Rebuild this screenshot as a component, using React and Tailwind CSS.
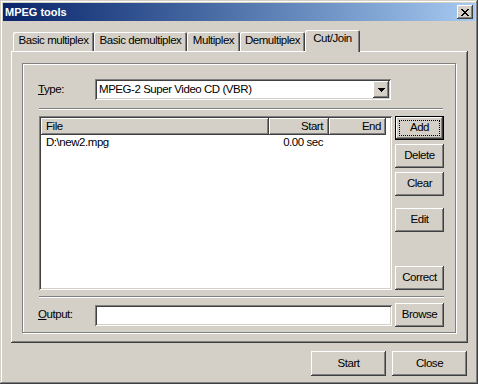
import React from "react";

const RAISED =
  "shadow-[inset_-1px_-1px_#404040,inset_1px_1px_#ffffff,inset_-2px_-2px_#808080,inset_2px_2px_#d4d0c8]";
const SUNKEN =
  "shadow-[inset_1px_1px_#808080,inset_-1px_-1px_#ffffff,inset_2px_2px_#404040,inset_-2px_-2px_#d4d0c8]";

function Btn({ children, className = "", def = false }) {
  if (def) {
    return (
      <div className={`border border-black bg-[#d4d0c8] flex ${className}`}>
        <div className={`flex-1 flex items-center justify-center p-[3px] ${RAISED}`}>
          <div className="w-full h-full border border-dotted border-black flex items-center justify-center">
            {children}
          </div>
        </div>
      </div>
    );
  }
  return (
    <div className={`bg-[#d4d0c8] flex items-center justify-center ${RAISED} ${className}`}>
      {children}
    </div>
  );
}

function Tab({ label, selected, w }) {
  return (
    <div
      className={`flex items-start justify-center bg-[#d4d0c8] rounded-t-[2px] shadow-[inset_1px_1px_#ffffff,inset_-1px_0_#404040,inset_-2px_0_#808080] ${
        selected ? "h-[22px] -mb-[1px] pt-[3px] relative z-10" : "h-[19px] pt-[3px]"
      }`}
      style={{ width: w }}
    >
      {label}
    </div>
  );
}

function Sep({ w }) {
  return (
    <div className="h-[2px] border-t border-[#808080] border-b border-b-white" style={{ width: w }} />
  );
}

export default function App() {
  return (
    <div
      className="w-[478px] h-[384px] bg-[#d4d0c8] p-[3px] text-black text-[11.5px] tracking-[-0.45px] leading-none shadow-[inset_-1px_-1px_#404040,inset_1px_1px_#d4d0c8,inset_-2px_-2px_#808080,inset_2px_2px_#ffffff]"
      style={{ fontFamily: '"Liberation Sans", Arial, sans-serif' }}
    >
      {/* Title bar */}
      <div className="h-[18px] bg-linear-to-r from-[#0a246a] to-[#a6caf0] flex items-center justify-between pl-[2px] pr-[2px]">
        <span className="text-white font-bold text-[11px] tracking-normal">MPEG tools</span>
        <div className={`w-[16px] h-[14px] bg-[#d4d0c8] flex items-center justify-center ${RAISED}`}>
          <svg width="8" height="7" viewBox="0 0 8 7" shapeRendering="crispEdges">
            <path d="M0 0h2v1h-2zM6 0h2v1h-2zM1 1h2v1h-2zM5 1h2v1h-2zM2 2h4v1h-4zM3 3h2v1h-2zM2 4h4v1h-4zM1 5h2v1h-2zM5 5h2v1h-2zM0 6h2v1h-2zM6 6h2v1h-2z" fill="#000" />
          </svg>
        </div>
      </div>

      {/* Body */}
      <div className="px-[8px] pt-[8px]">
        {/* Tabs */}
        <div className="flex items-end h-[22px] pl-[2px]">
          <Tab label="Basic multiplex" w={81} />
          <Tab label="Basic demultiplex" w={93} />
          <Tab label="Multiplex" w={53} />
          <Tab label="Demultiplex" w={65} />
          <Tab label="Cut/Join" w={55} selected />
        </div>

        {/* Panel */}
        <div className="w-[457px] h-[292px] pl-[11px] pt-[12px] shadow-[inset_-1px_-1px_#404040,inset_1px_1px_#ffffff,inset_-2px_-2px_#808080]">
          {/* Group box */}
          <div className="w-[434px] h-[270px] border border-[#808080] shadow-[inset_1px_1px_#ffffff,1px_1px_#ffffff] pl-[15px] pt-[15px] flex flex-col">
            {/* Type row */}
            <div className="flex items-center h-[21px]">
              <div className="w-[57px]">
                <span className="underline underline-offset-[1px]">T</span>ype:
              </div>
              <div className={`w-[296px] h-[21px] bg-white flex items-center p-[2px] ${SUNKEN}`}>
                <span className="flex-1 pl-[2px]">MPEG-2 Super Video CD (VBR)</span>
                <div className={`w-[16px] h-[17px] bg-[#d4d0c8] flex items-center justify-center ${RAISED}`}>
                  <svg width="7" height="4" viewBox="0 0 7 4" shapeRendering="crispEdges">
                    <path d="M0 0h7v1h-7zM1 1h5v1h-5zM2 2h3v1h-3zM3 3h1v1h-1z" fill="#000" />
                  </svg>
                </div>
              </div>
            </div>

            <div className="mt-[8px] ml-[1px]">
              <Sep w={404} />
            </div>

            {/* List + buttons */}
            <div className="flex mt-[6px] ml-[1px] h-[174px]">
              <div className={`w-[353px] h-[174px] bg-white p-[2px] flex flex-col ${SUNKEN}`}>
                <div className="flex h-[17px]">
                  <div className={`w-[228px] bg-[#d4d0c8] flex items-center pl-[5px] ${RAISED}`}>File</div>
                  <div className={`w-[60px] bg-[#d4d0c8] flex items-center justify-end pr-[6px] ${RAISED}`}>Start</div>
                  <div className={`w-[57px] bg-[#d4d0c8] flex items-center justify-end pr-[5px] ${RAISED}`}>End</div>
                </div>
                <div className="flex h-[16px] items-center">
                  <div className="w-[228px] pl-[5px]">D:\new2.mpg</div>
                  <div className="w-[60px] text-right pr-[6px]">0.00 sec</div>
                </div>
              </div>
              <div className="ml-[3px] w-[49px] flex flex-col">
                <Btn def className="h-[24px]">Add</Btn>
                <Btn className="h-[24px] mt-[4px]">Delete</Btn>
                <Btn className="h-[24px] mt-[4px]">Clear</Btn>
                <Btn className="h-[24px] mt-[12px]">Edit</Btn>
                <Btn className="h-[24px] mt-auto">Correct</Btn>
              </div>
            </div>

            <div className="mt-[6px] ml-[1px]">
              <Sep w={405} />
            </div>

            {/* Output row */}
            <div className="flex items-center mt-[5px] h-[24px]">
              <div className="w-[57px]">
                <span className="underline underline-offset-[1px]">O</span>utput:
              </div>
              <div className={`w-[297px] h-[21px] bg-white ${SUNKEN}`} />
              <Btn className="ml-[3px] w-[49px] h-[24px]">Browse</Btn>
            </div>
          </div>
        </div>

        {/* Bottom buttons */}
        <div className="flex mt-[8px] pl-[300px] gap-[6px]">
          <Btn className="w-[76px] h-[25px]">Start</Btn>
          <Btn className="w-[76px] h-[25px]">Close</Btn>
        </div>
      </div>
    </div>
  );
}
